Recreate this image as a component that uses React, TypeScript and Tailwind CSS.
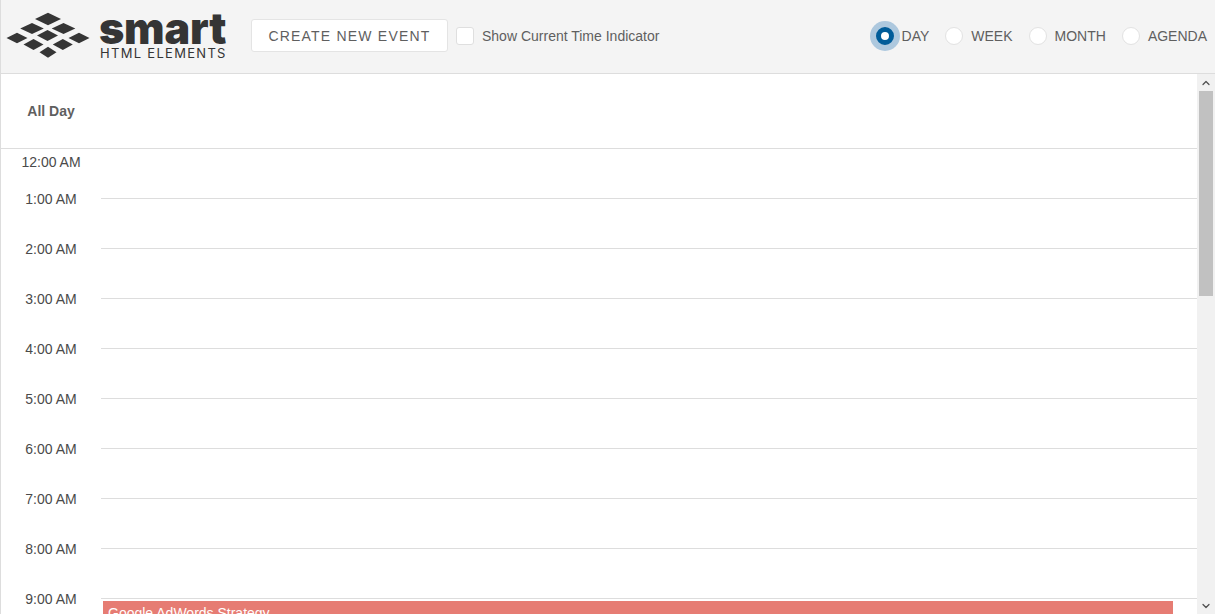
import { useState } from "react";
import { ChevronUp, ChevronDown } from "lucide-react";

const hours = ["1:00 AM", "2:00 AM", "3:00 AM", "4:00 AM", "5:00 AM", "6:00 AM", "7:00 AM", "8:00 AM", "9:00 AM"];

const diamonds = [
  [48, 19, 13, 6.3],
  [32, 28.5, 11.8, 5.6],
  [63.5, 28.5, 11.8, 5.6],
  [17, 38, 10.5, 5.3],
  [47.5, 35.5, 10.5, 5.5],
  [79, 38, 10.5, 5.3],
  [33.5, 44.5, 10, 5.5],
  [62.8, 44.5, 10, 5.5],
  [48, 52.2, 8.5, 5.5],
];

const views = [
  { label: "DAY", gap: "" },
  { label: "WEEK", gap: "ml-[16px]" },
  { label: "MONTH", gap: "ml-[16px]" },
  { label: "AGENDA", gap: "ml-[16px]" },
];

function Logo() {
  return (
    <div className="flex items-center w-[251px] shrink-0">
      <svg width="100" height="72" viewBox="0 0 100 72" className="shrink-0 -ml-[1px]">
        {diamonds.map(([x, y, w, h], i) => (
          <polygon key={i} points={`${x - w},${y} ${x},${y - h} ${x + w},${y} ${x},${y + h}`} fill="#353535" />
        ))}
      </svg>
      <div className="flex flex-col text-[#353535] font-['Inter',sans-serif]">
        <span className="text-[43px] leading-[32px] font-black tracking-[-0.2px] h-[34px] -ml-[1px]">smart</span>
        <span className="text-[13px] leading-[15px] font-normal tracking-[1.3px] whitespace-nowrap">HTML ELEMENTS</span>
      </div>
    </div>
  );
}

export default function App() {
  const [view, setView] = useState("DAY");

  return (
    <div className="h-[614px] w-[1215px] overflow-hidden flex flex-col bg-white border-l border-[#dddddd] text-[14px] text-[#5f5f5f] font-['Liberation_Sans',Arial,sans-serif]">
      {/* Header */}
      <header className="h-[74px] shrink-0 flex items-center bg-[#f4f4f4] border-b border-[#dddddd] pb-[1px]">
        <Logo />
        <button className="h-[33px] mb-[1px] pt-[2px] w-[197px] -ml-[1px] bg-white border border-[#e4e4e4] rounded-[3px] text-[14px] tracking-[1.2px] text-[#5f5f5f]">
          CREATE NEW EVENT
        </button>
        <div className="ml-[8px] w-[18px] h-[18px] bg-white border border-[#dfdfdf] rounded-[3px]" />
        <span className="ml-[8px]">Show Current Time Indicator</span>
        <div className="ml-auto flex items-center pr-[8px]">
          {views.map((v) => (
            <label key={v.label} className={`flex items-center cursor-pointer ${v.gap}`} onClick={() => setView(v.label)}>
              {view === v.label ? (
                <span className="w-[30px] h-[30px] rounded-full bg-[#adc8de] flex items-center justify-center">
                  <span className="w-[18px] h-[18px] rounded-full border-[5px] border-[#005c99] bg-white" />
                </span>
              ) : (
                <span className="w-[18px] h-[18px] rounded-full bg-white border border-[#e2e2e2]" />
              )}
              <span className={view === v.label ? "ml-[2px]" : "ml-[8px]"}>{v.label}</span>
            </label>
          ))}
        </div>
      </header>

      <div className="flex-1 flex min-h-0">
        <div className="flex-1 min-w-0 flex flex-col">
          {/* All day row */}
          <div className="h-[75px] shrink-0 flex items-center border-b border-[#dddddd]">
            <div className="w-[100px] text-center font-bold">All Day</div>
          </div>

          <div className="flex-1 flex min-h-0 overflow-hidden">
            {/* Time labels */}
            <div className="w-[100px] shrink-0 text-center text-[#4a4a4a]">
              <div className="h-[25px] pt-[2px] flex items-center justify-center">12:00 AM</div>
              {hours.map((h) => (
                <div key={h} className="h-[50px] flex items-center justify-center">
                  {h}
                </div>
              ))}
            </div>

            {/* Hour rows */}
            <div className="flex-1 min-w-0">
              {hours.map((h) => (
                <div key={h} className="h-[50px] border-b border-[#dddddd]" />
              ))}
              <div className="pt-[2px] pl-[2px] pr-[24px]">
                <div className="h-[30px] bg-[#e67c73] text-white pl-[5px] pt-[4px] leading-[16px]">Google AdWords Strategy</div>
              </div>
            </div>
          </div>
        </div>

        {/* Scrollbar */}
        <div className="w-[18px] shrink-0 bg-[#f1f1f1] flex flex-col items-center">
          <div className="h-[17px] flex items-center justify-center">
            <ChevronUp size={12} strokeWidth={2.5} color="#505050" />
          </div>
          <div className="w-[14px] h-[205px] bg-[#c1c1c1]" />
          <div className="flex-1" />
          <div className="h-[17px] flex items-center justify-center">
            <ChevronDown size={12} strokeWidth={2.5} color="#505050" />
          </div>
        </div>
      </div>
    </div>
  );
}
